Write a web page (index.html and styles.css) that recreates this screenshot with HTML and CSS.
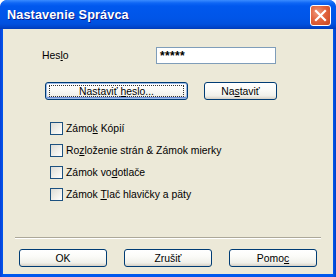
FILE: index.html
```html
<!DOCTYPE html>
<html>
<head>
<meta charset="utf-8">
<link rel="stylesheet" href="styles.css">
</head>
<body>
<div class="window">
  <div class="titlebar">
    <span class="title">Nastavenie Správca</span>
    <span class="close"><svg width="13" height="13" viewBox="0 0 13 13"><path d="M2 2 L11 11 M11 2 L2 11" stroke="#fff" stroke-width="2.2" stroke-linecap="square"/></svg></span>
  </div>
  <div class="client">
    <div class="row pw">
      <label class="lbl">Hes<u>l</u>o</label>
      <div class="input">*****</div>
    </div>
    <div class="row btns">
      <button class="btn default wide"><span class="focus"><span>Nastaviť <u>h</u>eslo...</span></span></button>
      <button class="btn small"><span>Na<u>s</u>taviť</span></button>
    </div>
    <div class="checks">
      <div class="chk"><span class="box"></span><span>Zámo<u>k</u> Kópií</span></div>
      <div class="chk"><span class="box"></span><span>Ro<u>z</u>loženie strán &amp; Zámok mierky</span></div>
      <div class="chk"><span class="box"></span><span>Zámok vo<u>d</u>otlače</span></div>
      <div class="chk"><span class="box"></span><span>Zámok <u>T</u>lač hlavičky a päty</span></div>
    </div>
    <div class="sep"></div>
    <div class="footer">
      <button class="btn foot"><span>OK</span></button>
      <button class="btn foot"><span>Zrušiť</span></button>
      <button class="btn foot"><span>Pomo<u>c</u></span></button>
    </div>
  </div>
</div>
</body>
</html>
```
FILE: styles.css
```css
html, body { margin: 0; padding: 0; background: #fff; }
.window {
  width: 336px; height: 277px; box-sizing: border-box;
  background: linear-gradient(to right, #0A3FD6 0, #0058EE 3px, #0058EE 333px, #0040C8 336px);
  border-radius: 7px 7px 0 0;
  display: flex; flex-direction: column;
  font-family: "Liberation Sans", Arial, sans-serif; font-size: 10.4px; color: #000;
  overflow: hidden;
}
.titlebar {
  height: 29px; flex: none; box-sizing: border-box;
  display: flex; align-items: center; justify-content: space-between;
  padding: 1px 5px 0 7px;
  background: linear-gradient(to bottom, #3A8CFF 0, #0E66F5 3px, #0058EE 6px, #0055E8 18px, #0050DE 24px, #0045CC 27px, #003BB8 29px);
  border-radius: 7px 7px 0 0;
}
.title {
  font-weight: bold; font-size: 12.7px; color: #fff;
  text-shadow: 1px 1px 0 #0A1B8A;
  letter-spacing: 0.1px;
}
.close {
  width: 21px; height: 21px; box-sizing: border-box;
  border: 1px solid #fff; border-radius: 3px;
  background: radial-gradient(circle at 35% 35%, #F09A7E 0, #E2643E 45%, #C8461F 100%);
  display: flex; align-items: center; justify-content: center;
}
.close svg { display: block; }
.client {
  flex: 1; background: #ECE9D8; margin: 0 3px 3px 3px;
}
.row { display: flex; align-items: center; }
.pw { padding-top: 18px; height: 17px; }
.lbl { margin-left: 39px; width: 114px; }
u { text-decoration: underline; text-underline-offset: 1px; }
.input {
  width: 120px; height: 17px; box-sizing: border-box;
  border: 1px solid #7F9DB9; background: #fff;
  padding: 2px 0 0 3px; font-size: 12px; font-weight: bold; letter-spacing: 0.3px; line-height: 12px;
}
.btns { margin-top: 18px; }
.btn {
  height: 18px; box-sizing: border-box; padding: 0;
  border: 1px solid #003C74; border-radius: 3px;
  background: linear-gradient(to bottom, #FFFFFF 0, #FBFBF8 40%, #F0F0EA 80%, #D6D0C5 100%);
  font-family: "Liberation Sans", Arial, sans-serif; font-size: 10.4px; color: #000;
  display: flex; align-items: center; justify-content: center;
  white-space: nowrap;
}
.wide { margin-left: 42px; width: 143px; }
.small { margin-left: 16px; width: 73px; }
.default {
  box-shadow: inset 0 0 0 1px #9DBBE8, inset 0 -1px 0 1px #6C8ED8;
}
.focus {
  display: flex; align-items: center; justify-content: center;
  width: calc(100% - 6px); height: 12px; box-sizing: border-box;
  border: 1px dotted #333;
}
.checks { margin-top: 22px; margin-left: 47px; display: flex; flex-direction: column; gap: 9px; }
.chk { display: flex; align-items: center; height: 13px; gap: 3px; white-space: nowrap; }
.box {
  width: 13px; height: 13px; box-sizing: border-box; flex: none;
  border: 1px solid #1C5180;
  background: linear-gradient(135deg, #DCDCD7 0, #EFEEE8 50%, #FFFFFF 100%);
}
.sep {
  margin: 36px 0 0 12px; width: 306px; height: 1px;
  background: #ACA899; border-bottom: 1px solid #fff;
}
.footer { display: flex; margin: 10px 0 0 16px; gap: 17px; }
.foot { width: 88px; }
```
